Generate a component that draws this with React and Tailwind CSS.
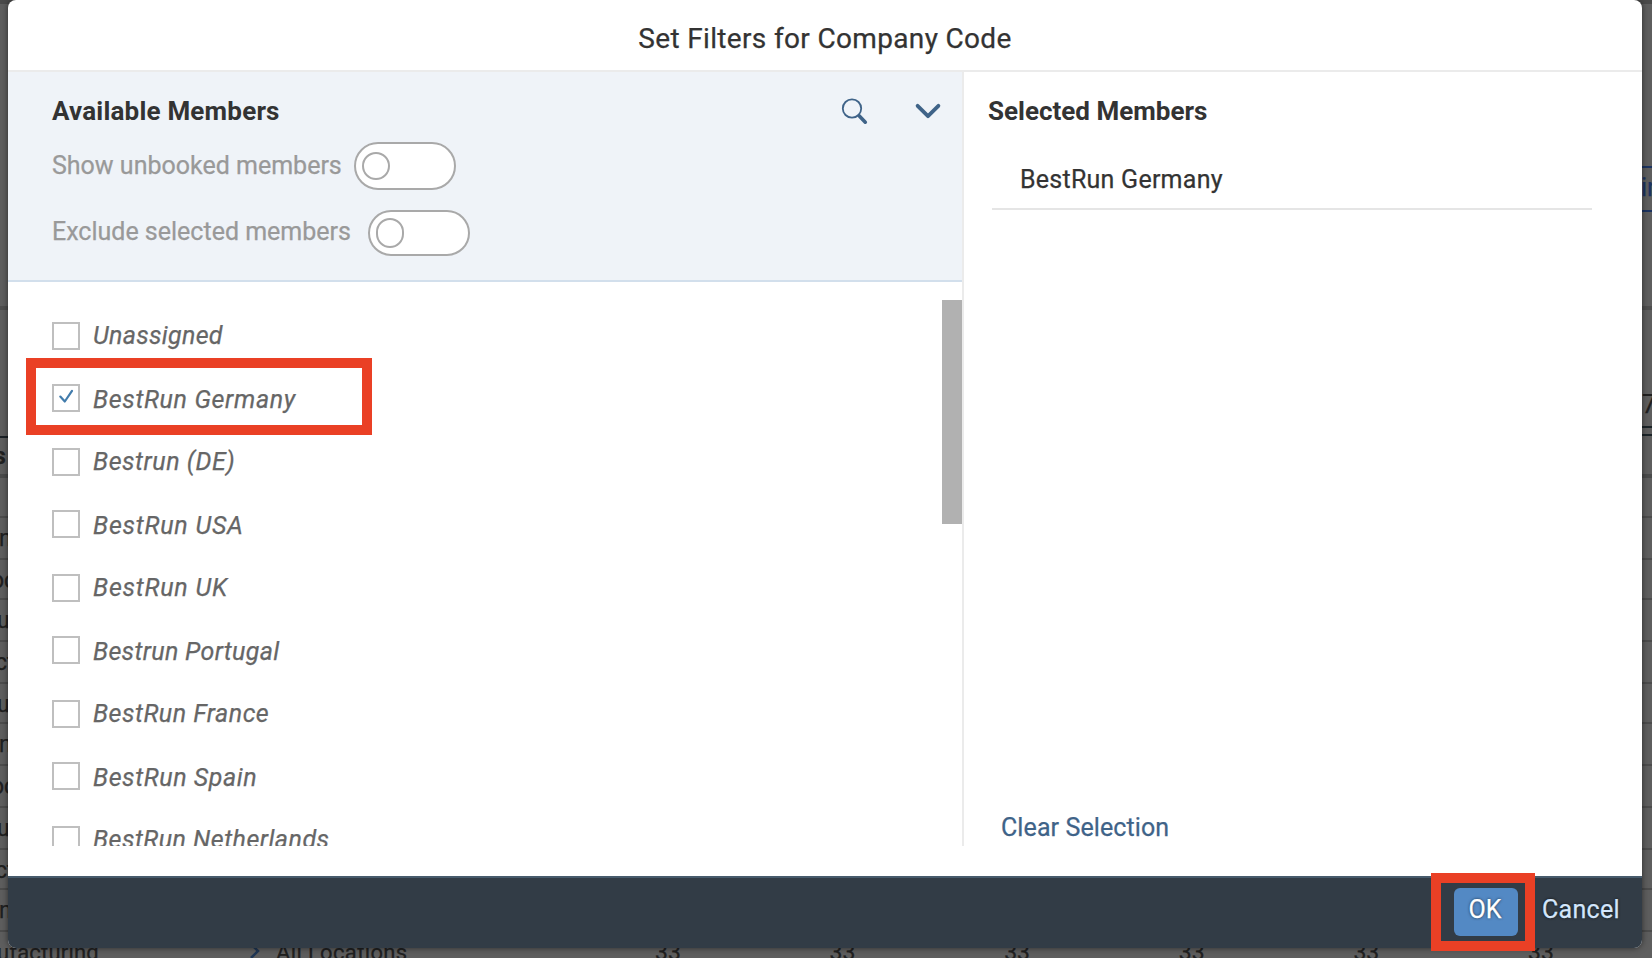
import React from "react";

const members = [
  { name: "Unassigned", spacing: "tracking-[0.3px]" },
  { name: "BestRun Germany", checked: true, spacing: "tracking-[0.65px]" },
  { name: "Bestrun (DE)", spacing: "tracking-[0.53px]" },
  { name: "BestRun USA", spacing: "tracking-[0.77px]" },
  { name: "BestRun UK", spacing: "tracking-[0.77px]" },
  { name: "Bestrun Portugal", spacing: "tracking-[0.32px]" },
  { name: "BestRun France", spacing: "tracking-[0.5px]" },
  { name: "BestRun Spain", spacing: "tracking-[0.57px]" },
  { name: "BestRun Netherlands", spacing: "tracking-[0.48px]" },
];

const tableRows = [
  { text: "", height: "h-[40px]", shift: "" },
  { text: "n", height: "h-[42px]", shift: "-ml-[1px]" },
  { text: "oc", height: "h-[40px]", shift: "-ml-[9px]" },
  { text: "u", height: "h-[42px]", shift: "-ml-[3px]" },
  { text: "ct", height: "h-[42px]", shift: "-ml-[5px]" },
  { text: "u", height: "h-[40px]", shift: "-ml-[3px]" },
  { text: "n", height: "h-[42px]", shift: "-ml-[1px]" },
  { text: "oc", height: "h-[42px]", shift: "-ml-[9px]" },
  { text: "u", height: "h-[42px]", shift: "-ml-[3px]" },
  { text: "ct", height: "h-[40px]", shift: "-ml-[5px]" },
  { text: "n", height: "h-[42px]", shift: "-ml-[1px]" },
];

function Backdrop() {
  return (
    <div className="flex h-full w-full flex-col bg-[#5e5e5e] text-[23px] leading-[26px] text-[#202020]">
      <div className="h-[4px] shrink-0 bg-[#4a4a4a]" />
      <div className="flex h-[306px] shrink-0 items-start justify-end border-b-4 border-[#4e4e4e] pt-[162px]">
        <div className="h-[46px] w-[20px] overflow-hidden border-y-2 border-[#1c3461] pt-[6px] pl-[9px] text-[25px] leading-[28px] text-[#1c3461]">
          in
        </div>
      </div>
      <div className="flex h-[168px] shrink-0 items-end justify-between border-b-4 border-[#4a4b4b]">
        <div className="h-[38px] w-[8px] overflow-hidden border-t-2 border-[#1b2126] pt-[6px] font-bold">
          <span className="-ml-[6px]">s</span>
        </div>
        <div className="w-[10px] overflow-hidden">
          <div className="h-[34px] text-[25px]">7</div>
          <div className="mb-[38px] h-[10px] border-y-2 border-[#1b2428]" />
        </div>
      </div>
      {tableRows.map((row, i) => (
        <div key={i} className={`${row.height} shrink-0 border-b-2 border-[#4c4c4c] pt-[8px]`}>
          <span className={row.shift}>{row.text}</span>
        </div>
      ))}
      <div className="flex h-[42px] w-[1800px] shrink-0 items-start pt-[8px]">
        <span className="-ml-[3px] w-[253px] shrink-0 text-[22px] tracking-[0.2px]">ufacturing</span>
        <svg className="mt-[3px] h-[16px] w-[10px] shrink-0" viewBox="0 0 10 16" fill="none" stroke="#1f3654" strokeWidth="2.5">
          <path d="M1 1l7 7-7 7" />
        </svg>
        <span className="ml-[16px] w-[379px] shrink-0 text-[22px] tracking-[0.35px]">All Locations</span>
        {[0, 1, 2, 3, 4, 5].map((n) => (
          <span key={n} className="w-[174.6px] shrink-0">33</span>
        ))}
      </div>
    </div>
  );
}

function Checkbox({ checked }) {
  return (
    <span className="flex h-[28px] w-[28px] shrink-0 items-center justify-center border-2 border-[#bfbfbf] bg-white">
      {checked && (
        <svg className="h-[24px] w-[24px]" viewBox="0 0 24 24" fill="none" stroke="#427cac" strokeWidth="2.2" strokeLinecap="round" strokeLinejoin="round">
          <path d="M6.3 10.6l4.5 4.9L18 4.8" />
        </svg>
      )}
    </span>
  );
}

function Toggle({ className, knob }) {
  return (
    <span className={`flex w-[102px] items-center rounded-full border-2 border-[#a9a9a9] bg-white pl-[6px] ${className}`}>
      <span className={`w-[28px] rounded-full border-2 border-[#a9a9a9] ${knob}`} />
    </span>
  );
}

export default function App() {
  return (
    <div className="relative h-[958px] w-[1652px] overflow-hidden font-['Roboto',sans-serif] [-webkit-text-stroke:0.25px]">
      <Backdrop />

      <div className="absolute top-0 left-[8px] flex h-[948px] w-[1634px] flex-col rounded-[8px] bg-white text-[25px] leading-[28px] text-[#333333] shadow-[0_0_6px_rgba(0,0,0,0.55)]">
        <header className="h-[72px] shrink-0 border-b-2 border-[#ebebeb] pt-[23px] text-center text-[28px] leading-[32px] tracking-[0.34px]">
          Set Filters for Company Code
        </header>

        <div className="flex h-[774px] shrink-0">
          <section className="flex w-[956px] flex-col border-r-2 border-[#ebebeb]">
            <div className="h-[210px] shrink-0 border-b-2 border-[#d2dfec] bg-[#eff3f8] pl-[44px]">
              <div className="flex h-[70px] items-start pt-[26px] pr-[20px]">
                <h2 className="-mt-[1px] flex-1 text-[26px] leading-[28px] font-bold tracking-[0.2px] [-webkit-text-stroke:0]">Available Members</h2>
                <svg className="h-[28px] w-[28px]" viewBox="0 0 28 28" fill="none" stroke="#3f6388" strokeLinecap="round">
                  <circle cx="11" cy="10.5" r="9.2" strokeWidth="1.8" />
                  <path d="M18.1 17.8l6.2 6.4" strokeWidth="3.6" />
                </svg>
                <svg className="ml-[45px] h-[28px] w-[28px]" viewBox="0 0 28 28" fill="none" stroke="#3f6388" strokeWidth="3.8" strokeLinecap="round" strokeLinejoin="round">
                  <path d="M3.6 7.8L14 18.2 24.4 7.8" />
                </svg>
              </div>
              <div className="flex h-[48px] items-start text-[#999999]">
                <span className="w-[302px] pt-[10px]">Show unbooked members</span>
                <Toggle className="h-[48px]" knob="h-[28px]" />
              </div>
              <div className="mt-[20px] flex h-[46px] items-start text-[#999999]">
                <span className="w-[316px] pt-[8px]">Exclude selected members</span>
                <Toggle className="h-[46px]" knob="h-[30px]" />
              </div>
            </div>

            <div className="flex h-[564px] shrink-0 overflow-hidden">
              <ul className="flex-1 pt-[40px] pl-[44px]">
                {members.map((m, i) => (
                  <li key={m.name} className={`flex items-start ${i % 2 ? "h-[64px]" : "h-[62px]"}`}>
                    <Checkbox checked={m.checked} />
                    <span className={`pl-[13px] text-[#666666] italic ${m.spacing} ${i % 2 ? "pt-[2px]" : ""}`}>{m.name}</span>
                  </li>
                ))}
              </ul>
              <div className="w-[20px] pt-[18px]">
                <div className="h-[224px] bg-[#b1b1b1]" />
              </div>
            </div>
          </section>

          <section className="flex flex-1 flex-col pt-[25px] pl-[24px]">
            <h2 className="text-[26px] leading-[28px] font-bold [-webkit-text-stroke:0]">Selected Members</h2>
            <div className="mt-[33px] ml-[4px] h-[52px] w-[600px] border-b-2 border-[#e5e5e5] pt-[8px] pl-[28px] tracking-[0.25px]">
              BestRun Germany
            </div>
            <button className="mt-auto mb-[4px] ml-[13px] self-start tracking-[0.1px] text-[#3f6388]">Clear Selection</button>
          </section>
        </div>

        <footer className="mt-auto flex h-[72px] items-start justify-end rounded-b-[8px] border-t-2 border-[#475b6c] bg-[#323c46] pt-[10px] pr-[22px]">
          <button className="mr-[24px] h-[48px] w-[64px] rounded-[6px] bg-[#5389c4] pr-[2px] pb-[4px] text-center text-white [text-shadow:0_0_3px_rgba(0,0,0,0.7)]">
            OK
          </button>
          <button className="h-[44px] w-[78px] text-left whitespace-nowrap tracking-[0.3px] text-[#d3e6fb] [text-shadow:0_0_3px_rgba(0,0,0,0.8)]">Cancel</button>
        </footer>
      </div>

      <div className="absolute top-[358px] left-[26px] h-[77px] w-[346px] border-[10px] border-[#ea4025]" />
      <div className="absolute top-[873px] left-[1431px] h-[78px] w-[104px] border-[10px] border-[#ea4025]" />
    </div>
  );
}
